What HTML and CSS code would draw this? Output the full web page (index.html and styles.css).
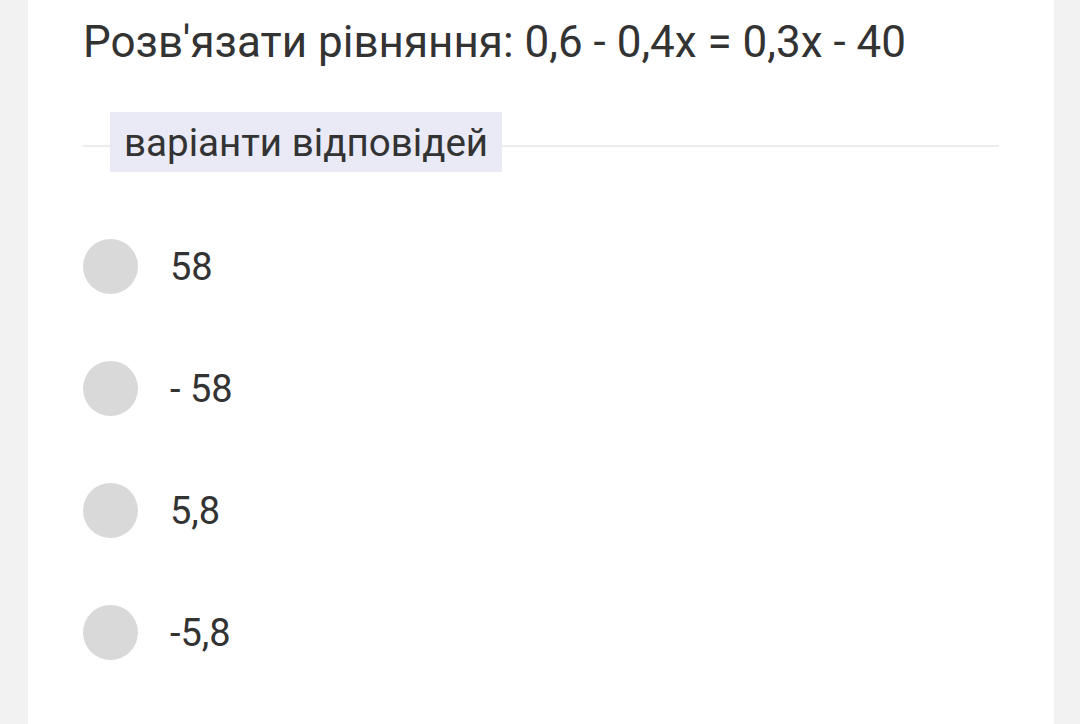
FILE: index.html
```
<!DOCTYPE html>
<html lang="uk">
<head>
<meta charset="utf-8">
<link rel="stylesheet" href="styles.css">
</head>
<body>
<div class="card">
  <h1 class="title">Розв'язати рівняння: 0,6 - 0,4x = 0,3x - 40</h1>
  <div class="divider">
    <span class="legend">варіанти відповідей</span>
  </div>
  <ul class="options">
    <li class="option"><span class="radio"></span><span class="opt-text">58</span></li>
    <li class="option"><span class="radio"></span><span class="opt-text">- 58</span></li>
    <li class="option"><span class="radio"></span><span class="opt-text">5,8</span></li>
    <li class="option"><span class="radio"></span><span class="opt-text">-5,8</span></li>
  </ul>
</div>
</body>
</html>
```
FILE: styles.css
```
html, body {
  margin: 0;
  padding: 0;
  height: 100%;
}
body {
  background: #f2f2f2;
  font-family: Roboto, "Noto Sans", sans-serif;
  color: #333333;
  overflow: hidden;
}
.card {
  margin-left: 28px;
  width: 1026px;
  height: 100%;
  background: #ffffff;
  box-sizing: border-box;
  padding: 14px 55px 0 55px;
}
.title {
  margin: 0;
  font-weight: 400;
  font-size: 44px;
  line-height: 56px;
  letter-spacing: 0;
}
.divider {
  margin-top: 42px;
  position: relative;
  height: 60px;
  display: flex;
  align-items: center;
}
.divider::before {
  content: "";
  position: absolute;
  left: 0;
  right: 0;
  top: 33px;
  height: 2px;
  background: #ececec;
}
.legend {
  position: relative;
  margin-left: 27px;
  background: #e9eaf6;
  height: 60px;
  box-sizing: border-box;
  padding: 0 14px;
  display: flex;
  align-items: center;
  font-size: 38.6px;
}
.options {
  list-style: none;
  margin: 67px 0 0 0;
  padding: 0;
  display: flex;
  flex-direction: column;
  gap: 67px;
}
.option {
  display: flex;
  align-items: center;
  height: 55px;
}
.radio {
  width: 55px;
  height: 55px;
  border-radius: 50%;
  background: #d9d9d9;
  flex: none;
}
.opt-text {
  margin-left: 32px;
  font-size: 38px;
}
```
